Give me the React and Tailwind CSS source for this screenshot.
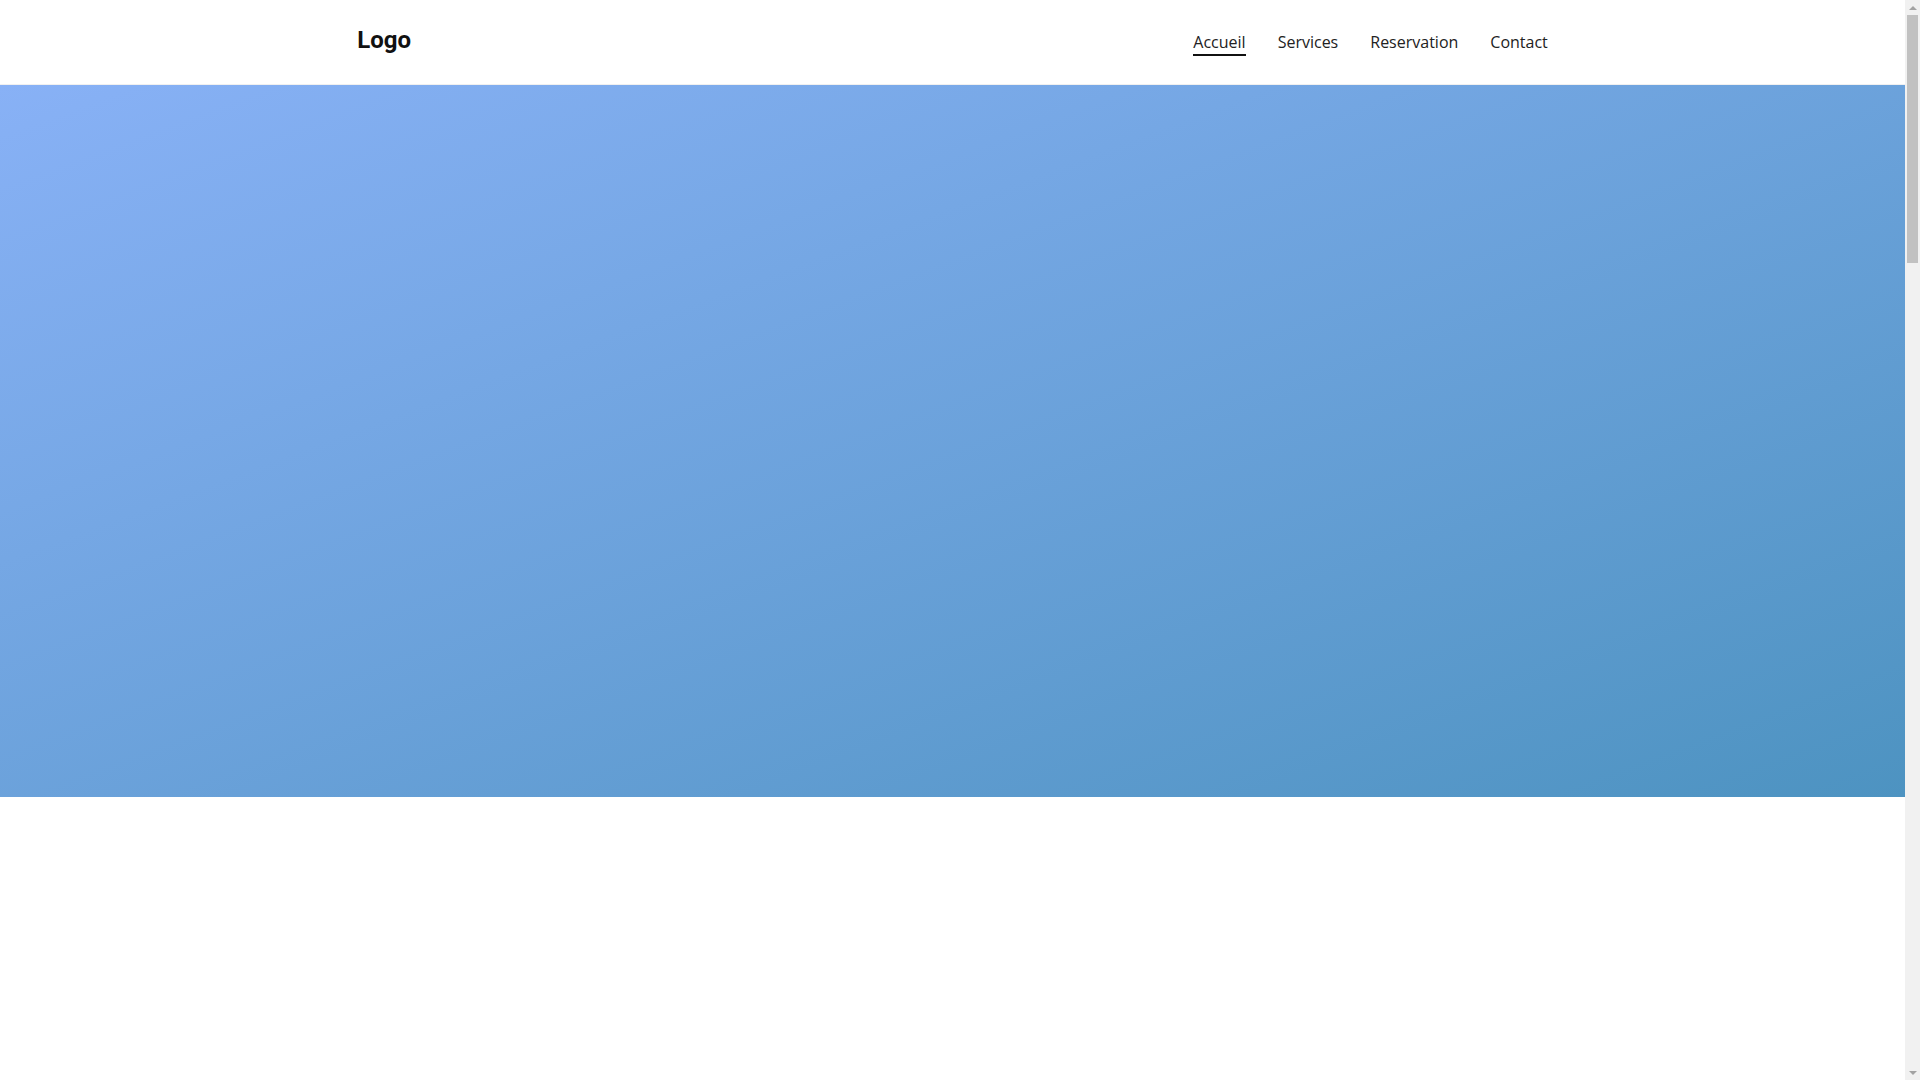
import { useState } from "react";

const links = ["Accueil", "Services", "Reservation", "Contact"];

function Scrollbar() {
  return (
    <div className="flex h-full w-[15px] shrink-0 flex-col items-center bg-[#f1f1f1]">
      <div className="flex h-[15px] w-full items-center justify-center">
        <div className="h-0 w-0 border-x-[4px] border-b-[4px] border-x-transparent border-b-[#a3a3a3]" />
      </div>
      <div className="h-[248px] w-[11px] bg-[#c1c1c1]" />
      <div className="flex-1" />
      <div className="flex h-[15px] w-full items-center justify-center">
        <div className="h-0 w-0 border-x-[4px] border-t-[4px] border-x-transparent border-t-[#a3a3a3]" />
      </div>
    </div>
  );
}

export default function App() {
  const [active, setActive] = useState("Accueil");

  return (
    <div className="flex h-screen overflow-hidden bg-white font-['Open_Sans',sans-serif]">
      <div className="min-w-0 flex-1 overflow-hidden">
        <header className="h-[85px] border-b border-[#f0f0f0] bg-white">
          <div className="mx-auto flex h-full w-[62.5%] items-center justify-between">
            <a href="#" className="-mt-1 font-['Roboto',sans-serif] text-2xl font-bold text-[#111]">
              Logo
            </a>
            <nav className="flex items-center gap-8 pt-[2px]">
              {links.map((link) => (
                <a
                  key={link}
                  href="#"
                  onClick={(e) => {
                    e.preventDefault();
                    setActive(link);
                  }}
                  className={
                    active === link
                      ? "border-b-2 border-[#111] text-base leading-6 text-[#222]"
                      : "border-b-2 border-transparent text-base leading-6 text-[#222]"
                  }
                >
                  {link}
                </a>
              ))}
            </nav>
          </div>
        </header>

        <section className="h-[712px] bg-gradient-to-br from-[#88b1f6] to-[#4d93c1]" />

        <main className="h-[600px]" />
      </div>
      <Scrollbar />
    </div>
  );
}
